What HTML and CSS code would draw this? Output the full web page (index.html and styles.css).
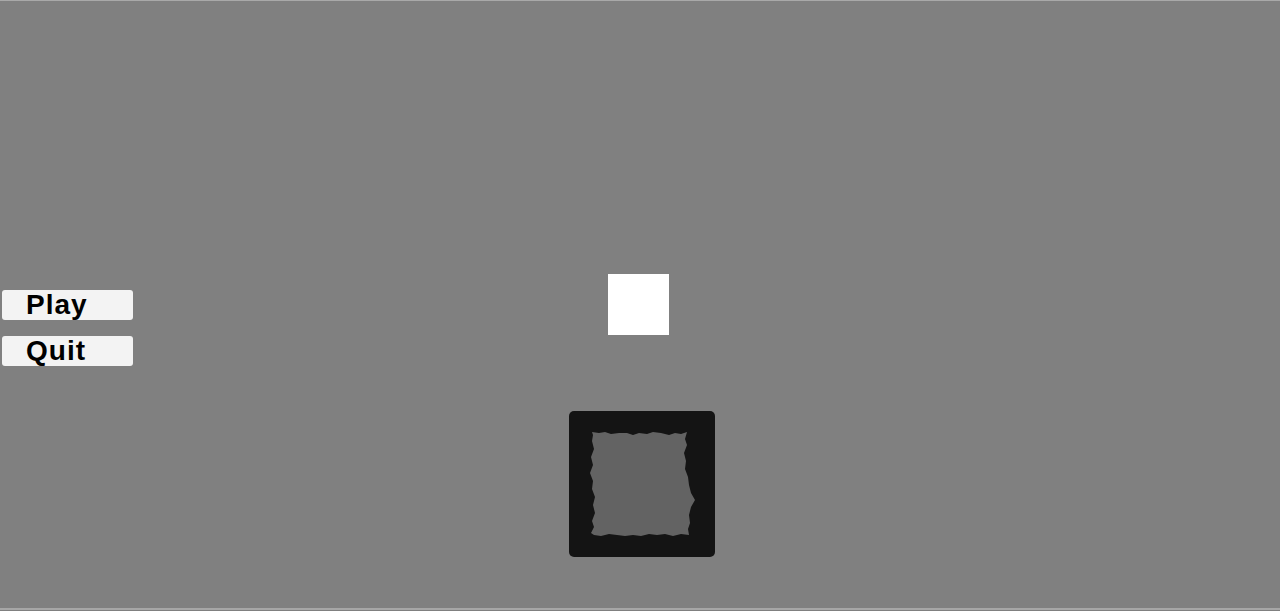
FILE: index.html
```html
<!DOCTYPE html>
<html lang="en">
<head>
<meta charset="utf-8">
<title>Menu</title>
<link rel="stylesheet" href="styles.css">
</head>
<body>
<div class="screen">
  <div class="menu">
    <button class="btn">Play</button>
    <button class="btn">Quit</button>
  </div>
  <div class="stage">
    <div class="tile"></div>
    <div class="slot">
      <svg width="146" height="146" viewBox="0 0 146 146">
        <rect x="0" y="0" width="146" height="146" rx="5" fill="#141414"/>
        <path fill="#636363" d="M23 21 L30 22 L36 21 L42 23 L50 22 L58 22 L64 24 L70 22 L78 23 L84 21 L92 22 L100 24 L106 22 L112 23 L118 21 L116 28 L118 34 L115 42 L117 50 L116 58 L119 66 L120 74 L122 82 L126 89 L122 96 L120 104 L121 112 L119 118 L120 124 L112 123 L104 125 L96 123 L88 124 L80 123 L72 125 L64 124 L56 125 L48 124 L40 123 L32 125 L25 124 L22 122 L25 116 L23 110 L26 102 L24 94 L26 86 L23 78 L24 70 L21 62 L24 54 L22 46 L25 38 L23 30 L24 24 Z"/>
      </svg>
    </div>
  </div>
</div>
</body>
</html>
```

FILE: styles.css
```css
html, body {
  margin: 0;
  padding: 0;
  background: #808080;
}
body {
  width: 1280px;
  height: 611px;
  overflow: hidden;
}
.screen {
  display: flex;
  box-sizing: border-box;
  height: 610px;
  border-top: 1px solid #a9a9a9;
  border-bottom: 2px solid #a6a6a6;
}
.menu {
  display: flex;
  flex-direction: column;
  gap: 16px;
  padding: 289px 0 0 2px;
  width: 131px;
}
.btn {
  box-sizing: border-box;
  width: 131px;
  height: 30px;
  margin: 0;
  padding: 0 0 0 24px;
  border: 0;
  border-radius: 3px;
  background: #f3f3f3;
  color: #000;
  font-family: "Liberation Sans", Arial, sans-serif;
  font-weight: bold;
  font-size: 28px;
  letter-spacing: 1px;
  line-height: 26px;
  text-align: left;
}
.stage {
  display: flex;
  flex-direction: column;
  align-items: flex-start;
  padding: 273px 0 0 436px;
}
.tile {
  width: 61px;
  height: 61px;
  margin-left: 39px;
  background: #ffffff;
}
.slot {
  margin-top: 76px;
  width: 146px;
  height: 146px;
}
.slot svg {
  display: block;
}
```
